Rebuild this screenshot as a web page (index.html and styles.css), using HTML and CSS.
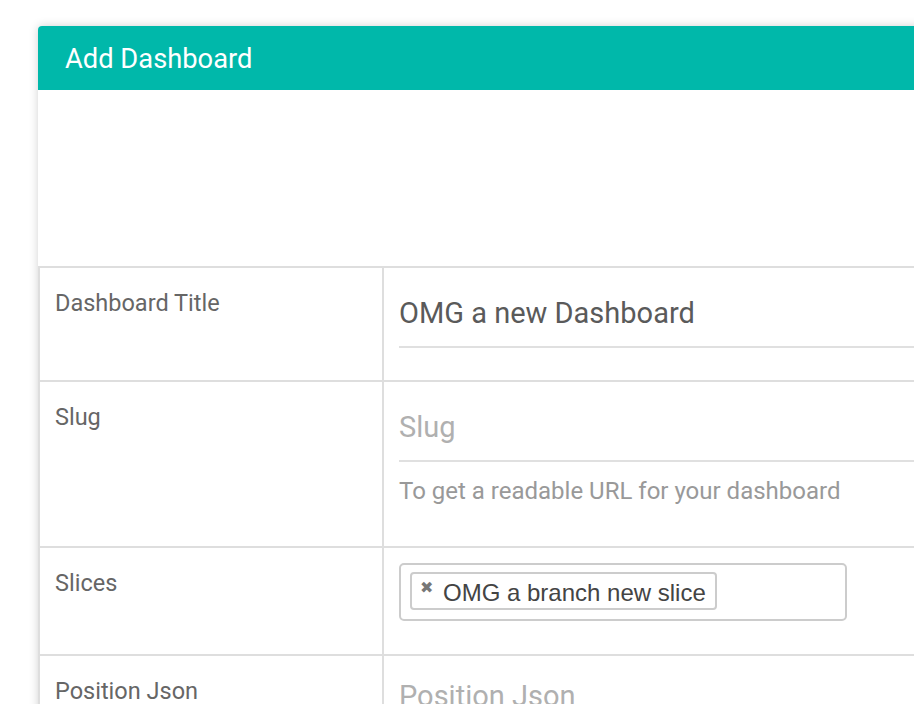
FILE: index.html
```html
<!DOCTYPE html>
<html>
<head>
<meta charset="utf-8">
<link rel="stylesheet" href="styles.css">
</head>
<body>
<div class="panel">
  <div class="panel-heading">Add Dashboard</div>
  <div class="panel-body"></div>
  <table class="form-table">
    <tr class="row-title">
      <td class="label-cell">Dashboard Title</td>
      <td class="field-cell">
        <div class="text-input value">OMG a new Dashboard</div>
      </td>
    </tr>
    <tr class="row-slug">
      <td class="label-cell">Slug</td>
      <td class="field-cell">
        <div class="text-input placeholder">Slug</div>
        <div class="help">To get a readable URL for your dashboard</div>
      </td>
    </tr>
    <tr class="row-slices">
      <td class="label-cell">Slices</td>
      <td class="field-cell">
        <div class="select-box">
          <span class="tag"><span class="tag-x">✖</span>OMG a branch new slice</span>
        </div>
      </td>
    </tr>
    <tr class="row-json">
      <td class="label-cell">Position Json</td>
      <td class="field-cell">
        <div class="text-input placeholder">Position Json</div>
      </td>
    </tr>
  </table>
</div>
</body>
</html>
```
FILE: styles.css
```css
html, body {
  margin: 0;
  padding: 0;
  overflow: hidden;
  background: #fff;
  font-family: Roboto, "Liberation Sans", sans-serif;
}
.panel {
  margin: 26px 0 0 38px;
  width: 1000px;
  border-radius: 4px 4px 0 0;
  box-shadow: 0 0 10px rgba(0, 0, 0, 0.18);
  background: #fff;
}
.panel-heading {
  height: 64px;
  box-sizing: border-box;
  padding: 2px 0 0 27px;
  line-height: 62px;
  background: #00b8aa;
  color: #fff;
  font-size: 27.3px;
  border-radius: 4px 4px 0 0;
}
.panel-body {
  height: 176px;
}
.form-table {
  width: 100%;
  border-collapse: collapse;
}
.form-table td {
  border: 2px solid #dedede;
  vertical-align: top;
  padding: 0;
}
.label-cell {
  width: 312px;
  padding: 20px 15px 0 15px !important;
  font-size: 23.5px;
  line-height: 30px;
  color: #666;
}
.field-cell {
  padding: 0 0 0 15px !important;
}
.text-input {
  font-size: 29px;
  line-height: 36px;
  padding: 27px 0 15px;
  border-bottom: 2px solid #e0e0e0;
}
.value { color: #5a5a5a; }
.placeholder { color: #b0b0b0; }
.row-title .label-cell { height: 92px; }
.row-slug .label-cell { height: 144px; }
.row-slices .label-cell { height: 86px; }
.row-json .label-cell { height: 86px; }
.help {
  font-size: 24px;
  line-height: 30px;
  color: #999;
  padding-top: 14px;
}
.select-box {
  margin-top: 15px;
  width: 448px;
  height: 58px;
  box-sizing: border-box;
  border: 2px solid #ccc;
  border-radius: 5px;
  padding: 7px 9px;
  font-family: "Liberation Sans", Arial, sans-serif;
}
.tag {
  display: inline-flex;
  align-items: center;
  height: 38px;
  box-sizing: border-box;
  border: 2px solid #ccc;
  border-radius: 4px;
  padding: 4px 9px 0 8px;
  font-size: 24px;
  color: #444;
}
.tag-x {
  font-size: 16px;
  color: #777;
  margin-right: 10px;
  margin-top: -12px;
}
.row-json .text-input { padding-top: 22px; }
```
